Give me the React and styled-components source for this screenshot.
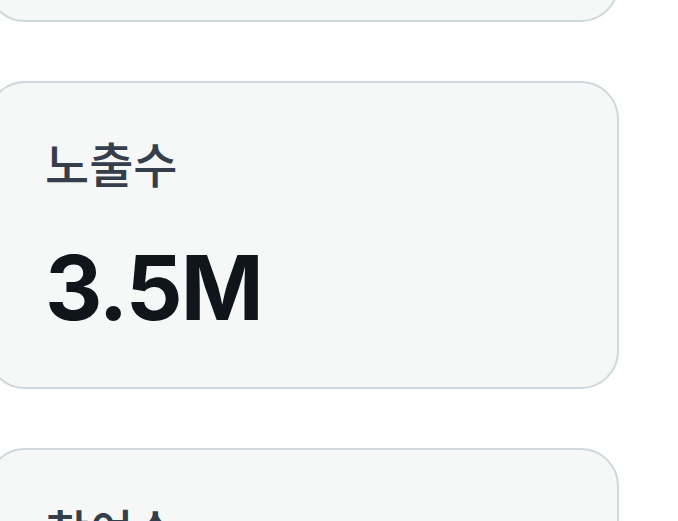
import styled, { createGlobalStyle } from 'styled-components';

const GlobalStyle = createGlobalStyle`
    body {
        margin: 0;
        background: #ffffff;
        font-family: Inter, "Noto Sans CJK KR", sans-serif;
    }
`;

const StatList = styled.div`
    display: flex;
    flex-direction: column;
    gap: 59px;
    width: 632px;
    margin: -286px 0 0 -13px;
`;

const StatCard = styled.div`
    height: 308px;
    box-sizing: border-box;
    padding: 51px 56px 0 56px;
    background: #f6f8f8;
    border: 2.5px solid #cfd8dd;
    border-radius: 38px;
`;

const StatLabel = styled.div`
    font-family: "Noto Sans CJK KR", sans-serif;
    font-size: 48px;
    font-weight: 500;
    line-height: 1.2;
    color: #343f4b;
`;

const StatValue = styled.div`
    margin-top: 43px;
    font-family: Inter, "Liberation Sans", sans-serif;
    font-size: 89px;
    font-weight: 700;
    line-height: 1.2;
    letter-spacing: -2px;
    color: #0f151b;
`;

const stats = [
    { label: '도달수', value: '1.2M' },
    { label: '노출수', value: '3.5M' },
    { label: '참여수', value: '84K' },
];

const App = () => {
    return (
        <>
            <GlobalStyle />
            <StatList>
                {stats.map((s) => (
                    <StatCard key={s.label}>
                        <StatLabel>{s.label}</StatLabel>
                        <StatValue>{s.value}</StatValue>
                    </StatCard>
                ))}
            </StatList>
        </>
    );
};

export default App;
